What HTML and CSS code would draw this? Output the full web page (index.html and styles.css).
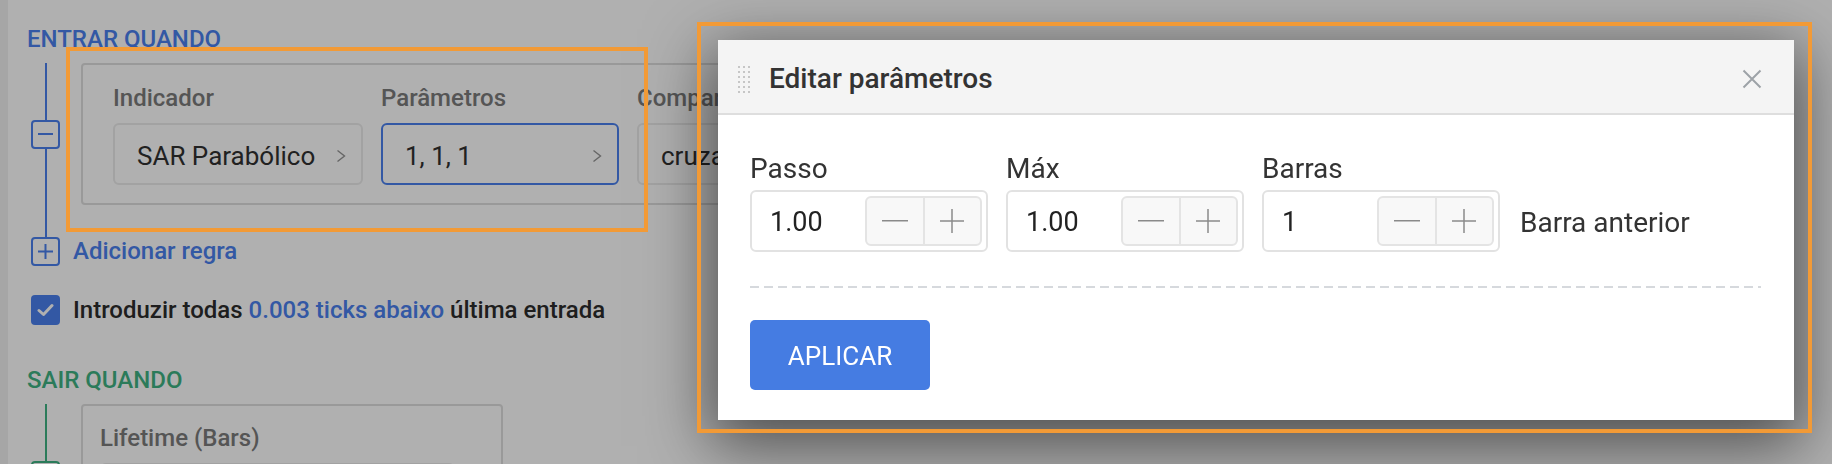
FILE: index.html
```html
<!DOCTYPE html>
<html lang="pt">
<head>
<meta charset="utf-8">
<title>Editar parâmetros</title>
<link rel="stylesheet" href="styles.css">
</head>
<body>
<div class="page">
  <section class="block block-entry">
    <h3 class="block-title">ENTRAR QUANDO</h3>
    <div class="rule">
      <div class="rail">
        <span class="seg"></span>
        <span class="rail-btn"><svg width="15" height="2" viewBox="0 0 15 2"><rect width="15" height="2" fill="currentColor"/></svg></span>
        <span class="seg"></span>
      </div>
      <div class="card card-entry">
        <div class="field field-wide">
          <div class="field-label">Indicador</div>
          <div class="select"><span>SAR Parabólico</span><svg class="chev" width="10" height="14" viewBox="0 0 10 14"><polyline points="1.5,1.5 8.5,7 1.5,12.5" fill="none" stroke="currentColor" stroke-width="1.4"/></svg></div>
        </div>
        <div class="field">
          <div class="field-label">Parâmetros</div>
          <div class="select select-active"><span>1, 1, 1</span><svg class="chev" width="10" height="14" viewBox="0 0 10 14"><polyline points="1.5,1.5 8.5,7 1.5,12.5" fill="none" stroke="currentColor" stroke-width="1.4"/></svg></div>
        </div>
        <div class="field field-clip">
          <div class="field-label">Comparar</div>
          <div class="select"><span>cruza</span></div>
        </div>
      </div>
    </div>
    <div class="connector"></div>
    <div class="add-row">
      <span class="rail-btn"><svg width="15" height="15" viewBox="0 0 15 15"><rect y="6.5" width="15" height="2" fill="currentColor"/><rect x="6.5" width="2" height="15" fill="currentColor"/></svg></span>
      <span class="add-text">Adicionar regra</span>
    </div>
    <div class="check-row">
      <span class="checkbox"><svg width="17" height="14" viewBox="0 0 17 14"><polyline points="2,7.5 6.5,11.5 15,2.5" fill="none" stroke="#fff" stroke-width="3" stroke-linecap="round" stroke-linejoin="round"/></svg></span>
      <span class="check-text">Introduzir todas <span class="link">0.003 ticks abaixo</span> última entrada</span>
    </div>
  </section>

  <section class="block block-exit">
    <h3 class="block-title">SAIR QUANDO</h3>
    <div class="rule">
      <div class="rail">
        <span class="seg"></span>
        <span class="rail-btn"><svg width="15" height="2" viewBox="0 0 15 2"><rect width="15" height="2" fill="currentColor"/></svg></span>
        <span class="seg"></span>
      </div>
      <div class="card card-exit">
        <div class="field field-life">
          <div class="field-label">Lifetime (Bars)</div>
          <div class="select"></div>
        </div>
      </div>
    </div>
  </section>
</div>

<div class="backdrop"></div>

<div class="modal">
  <div class="modal-header">
    <svg class="grip" width="12" height="27" viewBox="0 0 12 27">
      <g fill="#c6c6c6">
        <rect x="0" y="0" width="2" height="2"/><rect x="5" y="0" width="2" height="2"/><rect x="10" y="0" width="2" height="2"/>
        <rect x="0" y="5" width="2" height="2"/><rect x="5" y="5" width="2" height="2"/><rect x="10" y="5" width="2" height="2"/>
        <rect x="0" y="10" width="2" height="2"/><rect x="5" y="10" width="2" height="2"/><rect x="10" y="10" width="2" height="2"/>
        <rect x="0" y="15" width="2" height="2"/><rect x="5" y="15" width="2" height="2"/><rect x="10" y="15" width="2" height="2"/>
        <rect x="0" y="20" width="2" height="2"/><rect x="5" y="20" width="2" height="2"/><rect x="10" y="20" width="2" height="2"/>
        <rect x="0" y="25" width="2" height="2"/><rect x="5" y="25" width="2" height="2"/><rect x="10" y="25" width="2" height="2"/>
      </g>
    </svg>
    <h2 class="modal-title">Editar parâmetros</h2>
    <svg class="close" width="20" height="20" viewBox="0 0 20 20"><path d="M1.5 1.5 L18.5 18.5 M18.5 1.5 L1.5 18.5" stroke="currentColor" stroke-width="2" fill="none"/></svg>
  </div>
  <div class="modal-body">
    <div class="params">
      <div class="param">
        <div class="param-label">Passo</div>
        <div class="num-input">
          <span class="num-value">1.00</span>
          <span class="stepper">
            <span class="step"><svg width="26" height="2" viewBox="0 0 26 2"><rect width="26" height="1.5" fill="currentColor"/></svg></span>
            <span class="step"><svg width="24" height="24" viewBox="0 0 24 24"><rect y="11.25" width="24" height="1.5" fill="currentColor"/><rect x="11.25" width="1.5" height="24" fill="currentColor"/></svg></span>
          </span>
        </div>
      </div>
      <div class="param">
        <div class="param-label">Máx</div>
        <div class="num-input">
          <span class="num-value">1.00</span>
          <span class="stepper">
            <span class="step"><svg width="26" height="2" viewBox="0 0 26 2"><rect width="26" height="1.5" fill="currentColor"/></svg></span>
            <span class="step"><svg width="24" height="24" viewBox="0 0 24 24"><rect y="11.25" width="24" height="1.5" fill="currentColor"/><rect x="11.25" width="1.5" height="24" fill="currentColor"/></svg></span>
          </span>
        </div>
      </div>
      <div class="param">
        <div class="param-label">Barras</div>
        <div class="num-input">
          <span class="num-value">1</span>
          <span class="stepper">
            <span class="step"><svg width="26" height="2" viewBox="0 0 26 2"><rect width="26" height="1.5" fill="currentColor"/></svg></span>
            <span class="step"><svg width="24" height="24" viewBox="0 0 24 24"><rect y="11.25" width="24" height="1.5" fill="currentColor"/><rect x="11.25" width="1.5" height="24" fill="currentColor"/></svg></span>
          </span>
        </div>
      </div>
      <div class="param-suffix">Barra anterior</div>
    </div>
    <div class="divider"></div>
    <button class="apply">APLICAR</button>
  </div>
</div>

<div class="annot annot-rule"></div>
<div class="annot annot-modal"></div>
</body>
</html>
```

FILE: styles.css
```css
* { box-sizing: border-box; }

html, body {
  margin: 0;
  padding: 0;
  height: 100%;
  overflow: hidden;
  font-family: Roboto, "Liberation Sans", Arial, sans-serif;
  background: #fff;
}

.page {
  min-height: 100%;
  border-left: 8px solid #f1f1f1;
  padding: 25px 0 0 19px;
  background: #fff;
}

.block-title {
  margin: 0 0 10px;
  font-size: 24px;
  line-height: 28px;
  font-weight: 500;
}

.block-entry { --accent: #4a80ee; }
.block-exit { --accent: #3fb283; margin-top: 41px; }

.block-title { color: var(--accent); }

.rule {
  display: flex;
  gap: 21px;
  margin-left: 4px;
}

.rail {
  width: 29px;
  flex: none;
  display: flex;
  flex-direction: column;
  align-items: center;
}

.seg {
  flex: 1;
  width: 2px;
  background: var(--accent);
}

.rail-btn {
  width: 29px;
  height: 29px;
  flex: none;
  border: 2px solid var(--accent);
  border-radius: 4px;
  display: flex;
  align-items: center;
  justify-content: center;
  color: var(--accent);
}

.card {
  border: 2px solid #dedede;
  border-radius: 4px;
  display: flex;
  gap: 18px;
  flex: none;
}

.card-entry { padding: 19px 30px 18px; width: 900px; }
.card-exit { padding: 18px 30px 18px 17px; width: 422px; min-height: 143px; }

.field { width: 238px; flex: none; }
.field-wide { width: 250px; }
.field-life { width: 355px; }
.field-clip { width: 120px; }

.field-label {
  font-size: 24px;
  line-height: 28px;
  font-weight: 500;
  color: #7b7b7b;
  margin-bottom: 11px;
  white-space: nowrap;
}

.select {
  height: 62px;
  border: 2px solid #ebebeb;
  border-radius: 6px;
  padding: 4px 15px 0 22px;
  display: flex;
  align-items: center;
  justify-content: space-between;
  font-size: 26px;
  color: #313131;
  white-space: nowrap;
}

.field-clip .select { width: 238px; }

.select-active { border-color: #4a80ee; }

.chev { color: #949494; flex: none; }

.connector {
  width: 2px;
  height: 32px;
  margin-left: 17.5px;
  background: #4a80ee;
}

.add-row,
.check-row {
  display: flex;
  align-items: center;
  gap: 13px;
  margin-left: 4px;
  --accent: #4a80ee;
}

.add-text {
  font-size: 24px;
  line-height: 29px;
  font-weight: 500;
  color: #4a80ee;
}

.check-row { margin-top: 29px; }

.checkbox {
  width: 29px;
  height: 30px;
  border-radius: 4px;
  background: #4a80ee;
  display: flex;
  align-items: center;
  justify-content: center;
  flex: none;
}

.check-text {
  font-size: 24px;
  line-height: 29px;
  font-weight: 500;
  color: #2c2c2c;
}

.link { color: #4a80ee; }

.card-exit .select { padding-left: 20px; }

/* backdrop + modal */
.backdrop {
  position: fixed;
  inset: 0;
  background: rgba(0, 0, 0, 0.31);
}

.modal {
  position: absolute;
  left: 718px;
  top: 40px;
  width: 1076px;
  background: #fff;
  box-shadow: 0 18px 60px 8px rgba(0, 0, 0, 0.55);
}

.modal-header {
  display: flex;
  align-items: center;
  padding: 23px 32px 18px 20px;
  background: #f4f4f4;
  border-bottom: 2px solid #dedede;
}

.grip { flex: none; margin-right: 19px; }

.modal-title {
  margin: 0;
  font-size: 28px;
  line-height: 32px;
  font-weight: 500;
  color: #333;
}

.close { margin-left: auto; color: #9da2a7; flex: none; }

.modal-body {
  padding: 38px 33px 30px 32px;
}

.params {
  display: flex;
  align-items: flex-end;
  gap: 18px;
}

.param { width: 238px; flex: none; }

.param-label {
  font-size: 28px;
  line-height: 32px;
  color: #333;
  margin-bottom: 5px;
}

.num-input {
  height: 62px;
  border: 2px solid #e2e2e2;
  border-radius: 6px;
  display: flex;
  align-items: center;
  padding: 0 4px 0 18px;
}

.num-value {
  flex: 1;
  font-size: 27px;
  color: #222;
  padding-top: 2px;
}

.stepper {
  width: 117px;
  height: 50px;
  border: 2px solid #e4e4e4;
  border-radius: 6px;
  background: #f8f8f8;
  display: flex;
  flex: none;
}

.step {
  flex: 1;
  display: flex;
  align-items: center;
  justify-content: center;
  color: #8a8a8a;
}

.step + .step { border-left: 2px solid #e4e4e4; }

.param-suffix {
  height: 62px;
  display: flex;
  align-items: center;
  margin-left: 2px;
  font-size: 28px;
  color: #333;
  padding-top: 2px;
}

.divider {
  height: 2px;
  margin-top: 34px;
  background-image: repeating-linear-gradient(to right, #d6d9dd 0 9px, transparent 9px 14px);
}

.apply {
  display: block;
  margin-top: 32px;
  width: 180px;
  height: 70px;
  border: none;
  border-radius: 5px;
  background: #457ce2;
  color: #fff;
  font-family: inherit;
  font-size: 26px;
  font-weight: 400;
  padding: 2px 0 0;
}

/* annotation highlights */
.annot {
  position: absolute;
  border: 4px solid #f29a36;
  pointer-events: none;
}

.annot-rule { left: 66px; top: 47px; width: 582px; height: 185px; }
.annot-modal { left: 697px; top: 22px; width: 1115px; height: 411px; }
```
